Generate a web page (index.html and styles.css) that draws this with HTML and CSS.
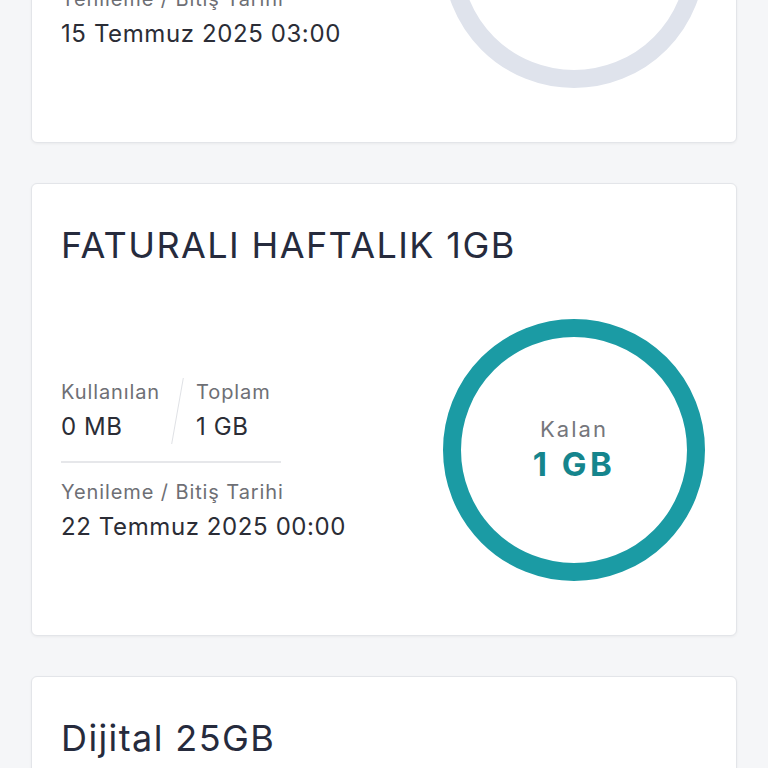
FILE: index.html
```html
<!DOCTYPE html>
<html lang="tr">
<head>
    <meta charset="UTF-8">
    <meta name="viewport" content="width=device-width, initial-scale=1.0">
    <title>Paketlerim</title>
    <link rel="stylesheet" href="styles.css">
</head>
<body>
    <div class="package-list">
        <div class="package-card">
            <h2>FATURALI AYLIK 10GB</h2>
            <div class="package-body">
                <div class="package-info">
                    <div class="usage-row">
                        <div class="usage-item">
                            <span class="label">Kullanılan</span>
                            <span class="value">10 GB</span>
                        </div>
                        <span class="slash"></span>
                        <div class="usage-item">
                            <span class="label">Toplam</span>
                            <span class="value">10 GB</span>
                        </div>
                    </div>
                    <hr class="divider">
                    <span class="label">Yenileme / Bitiş Tarihi</span>
                    <span class="value">15 Temmuz 2025 03:00</span>
                </div>
                <div class="ring ring-empty">
                    <span class="ring-label">Kalan</span>
                    <span class="ring-value">0 GB</span>
                </div>
            </div>
        </div>

        <div class="package-card">
            <h2>FATURALI HAFTALIK 1GB</h2>
            <div class="package-body">
                <div class="package-info">
                    <div class="usage-row">
                        <div class="usage-item">
                            <span class="label">Kullanılan</span>
                            <span class="value">0 MB</span>
                        </div>
                        <span class="slash"></span>
                        <div class="usage-item">
                            <span class="label">Toplam</span>
                            <span class="value">1 GB</span>
                        </div>
                    </div>
                    <hr class="divider">
                    <span class="label">Yenileme / Bitiş Tarihi</span>
                    <span class="value">22 Temmuz 2025 00:00</span>
                </div>
                <div class="ring">
                    <span class="ring-label">Kalan</span>
                    <span class="ring-value">1 GB</span>
                </div>
            </div>
        </div>

        <div class="package-card">
            <h2>Dijital 25GB</h2>
            <div class="package-body">
                <div class="package-info">
                    <div class="usage-row">
                        <div class="usage-item">
                            <span class="label">Kullanılan</span>
                            <span class="value">3,2 GB</span>
                        </div>
                        <span class="slash"></span>
                        <div class="usage-item">
                            <span class="label">Toplam</span>
                            <span class="value">25 GB</span>
                        </div>
                    </div>
                    <hr class="divider">
                    <span class="label">Yenileme / Bitiş Tarihi</span>
                    <span class="value">01 Ağustos 2025 00:00</span>
                </div>
                <div class="ring">
                    <span class="ring-label">Kalan</span>
                    <span class="ring-value">21,8 GB</span>
                </div>
            </div>
        </div>
    </div>
</body>
</html>
```

FILE: styles.css
```css
body {
    font-family: Inter, "Open Sans", sans-serif;
    background-color: #f5f6f8;
    margin: 0;
    color: #2b2d36;
}

/* page is scrolled: first card sits partly above the viewport */
.package-list {
    display: flex;
    flex-direction: column;
    gap: 40px;
    padding: 0 31px;
    margin-top: -310px;
}

.package-card {
    background: white;
    border: 1px solid #e3e5e9;
    border-radius: 6px;
    box-shadow: 0px 1px 3px rgba(0, 0, 0, 0.05);
    padding: 39px 31px 54px 29px;
}

.package-card h2 {
    margin: 0;
    font-size: 36px;
    line-height: 44px;
    font-weight: 400;
    letter-spacing: 1.4px;
    color: #262b3d;
}

.package-body {
    display: flex;
    justify-content: space-between;
    align-items: center;
    margin-top: 52px;
}

.package-info {
    display: flex;
    flex-direction: column;
    padding-top: 21px;
}

.usage-row {
    display: flex;
    align-items: center;
}

.usage-item {
    display: flex;
    flex-direction: column;
}

.slash {
    width: 1px;
    height: 66px;
    background-color: #dfe1e5;
    transform: skewX(-10deg);
    margin: 0 18px 0 17px;
}

.label {
    font-size: 20px;
    line-height: 26px;
    letter-spacing: 0.9px;
    color: #6e6f75;
    margin-bottom: 6px;
    white-space: nowrap;
}

.value {
    font-size: 24px;
    line-height: 32px;
    letter-spacing: 0.6px;
    color: #2b2d36;
    white-space: nowrap;
}

.divider {
    border: none;
    width: 220px;
    height: 2px;
    background-color: #e6e7ea;
    margin: 17px 0 16px;
}

.ring {
    width: 262px;
    height: 262px;
    flex-shrink: 0;
    box-sizing: border-box;
    border: 18px solid #1b9ba4;
    border-radius: 50%;
    display: flex;
    flex-direction: column;
    align-items: center;
    justify-content: center;
}

.ring-empty {
    border-color: #dfe3ec;
}

.ring-label {
    font-size: 22px;
    line-height: 28px;
    letter-spacing: 2px;
    color: #75767b;
}

.ring-value {
    font-size: 33px;
    line-height: 42px;
    font-weight: 700;
    letter-spacing: 3.5px;
    color: #15858d;
    margin-top: 0;
}
```
